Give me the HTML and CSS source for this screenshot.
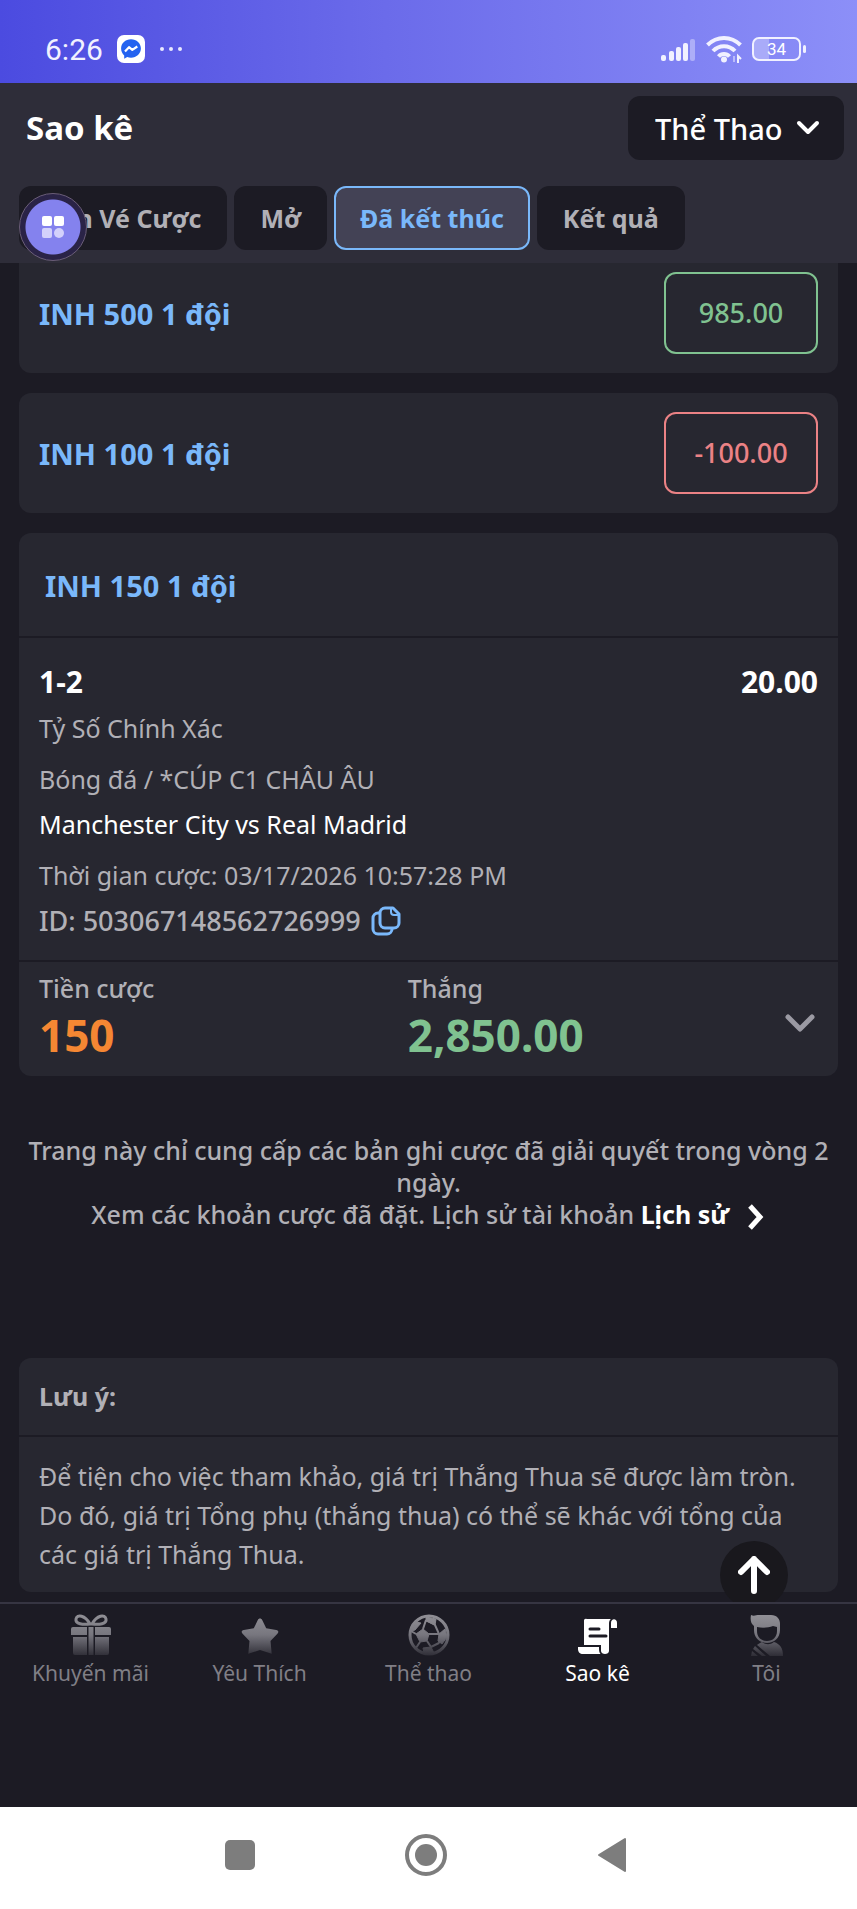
FILE: index.html
```
<!DOCTYPE html>
<html lang="vi">
  <head>
    <meta charset="UTF-8" />
    <meta name="viewport" content="width=device-width, initial-scale=1.0" />
    <title>Sao kê</title>
    <link rel="stylesheet" href="styles.css">
  </head>
  <body>
    <div class="status-bar">
      <div class="status-left">
        <span class="clock">6:26</span>
        <svg width="28" height="28" viewBox="0 0 28 28">
          <rect width="28" height="28" rx="7" fill="#fff" />
          <path d="M14 4.300c-5.600 0-9.900 4-9.900 9.300 0 2.800 1.200 5.200 3.100 6.900v3.200l3-1.600c1.200.4 2.500.6 3.800.6 5.600 0 9.900-4 9.900-9.100S19.600 4.300 14 4.300z" fill="#2463f0" />
          <path d="M8 16.500l4-4.300 3.300 2.700 5-3.400" fill="none" stroke="#fff" stroke-width="2.200" stroke-linejoin="round" />
        </svg>
        <svg width="24" height="6" viewBox="0 0 24 6" fill="#e9e9ff">
          <circle cx="3" cy="3" r="2" />
          <circle cx="12" cy="3" r="2" />
          <circle cx="21" cy="3" r="2" />
        </svg>
      </div>
      <div class="status-right">
        <svg width="36" height="24" viewBox="0 0 36 24" fill="#f1f1ff">
          <rect x="1" y="18" width="5" height="6" rx="2" />
          <rect x="9" y="14" width="5" height="10" rx="2" />
          <rect x="16" y="10" width="5" height="14" rx="2" />
          <rect x="23" y="6" width="5" height="18" rx="2" />
          <rect x="30" y="2" width="5" height="22" rx="2" opacity="0.4" />
        </svg>
        <svg width="36" height="28" viewBox="0 0 36 28" fill="none" stroke="#f1f1ff" stroke-width="4">
          <path d="M1.500 10C11 .6 25 .6 34.500 10" />
          <path d="M7 16c6-6.500 16-6.500 22 0" />
          <path d="M12.500 21.500c3-3.500 8-3.500 11 0" />
          <circle cx="18" cy="24.500" r="1.500" stroke-width="3" />
          <path d="M32 28v-7l3 3" stroke-width="2" />
          <path d="M28 21v6" stroke-width="2" opacity="0.5" />
        </svg>
        <span class="battery">34</span>
      </div>
    </div>

    <header class="header">
      <div class="title-row">
        <h1>Sao kê</h1>
        <div class="select-box">
          <select aria-label="Loại cược">
            <option>Thể Thao</option>
          </select>
          <svg class="select-arrow" width="24" height="16" viewBox="0 0 24 16">
            <path d="M3 3l9 9 9-9" fill="none" stroke="#fff" stroke-width="4" stroke-linecap="round" stroke-linejoin="round" />
          </svg>
        </div>
      </div>
      <div class="tabs">
        <button class="tab">Bán Vé Cược</button>
        <button class="tab">Mở</button>
        <button class="tab active">Đã kết thúc</button>
        <button class="tab">Kết quả</button>
      </div>
      <!-- Nút nổi -->
      <button class="bubble" aria-label="Menu">
        <svg width="24" height="24" viewBox="0 0 24 24" fill="#fff">
          <rect x="1" y="1" width="10" height="10" rx="2" />
          <rect x="13" y="1" width="10" height="10" rx="2" />
          <rect x="1" y="13" width="10" height="10" rx="2" fill="#d3d1fb" />
          <circle cx="18" cy="18" r="5" fill="#d3d1fb" />
        </svg>
      </button>
    </header>

    <main class="content">
      <section class="card bet-row bet-row-cut">
        <h2>INH 500 1 đội</h2>
        <span class="result win">985.00</span>
      </section>
      <section class="card bet-row">
        <h2>INH 100 1 đội</h2>
        <span class="result lose">-100.00</span>
      </section>

      <section class="card">
        <div class="bet-head">
          <h2>INH 150 1 đội</h2>
        </div>
        <div class="bet-body">
          <div class="pick">
            <span>1-2</span>
            <span>20.00</span>
          </div>
          <p>Tỷ Số Chính Xác</p>
          <p class="group-start">Bóng đá / *CÚP C1 CHÂU ÂU</p>
          <p class="match">Manchester City vs Real Madrid</p>
          <p class="group-start">Thời gian cược: 03/17/2026 10:57:28 PM</p>
          <p class="bet-id">
            ID: 503067148562726999
            <button class="icon-btn" aria-label="Sao chép">
              <svg width="30" height="30" viewBox="0 0 30 30" fill="none" stroke="#7ab8fa" stroke-width="3" stroke-linejoin="round">
                <path d="M14 2h8l6 6v9a5 5 0 0 1-5 5h-9a5 5 0 0 1-5-5V7a5 5 0 0 1 5-5z" />
                <path d="M20 2v4a3 3 0 0 0 3 3h5" stroke-width="2" />
                <path d="M9 7H7a5 5 0 0 0-5 5v11a5 5 0 0 0 5 5h9a5 5 0 0 0 5-5v-1" />
              </svg>
            </button>
          </p>
        </div>
        <div class="bet-foot">
          <div class="stake">
            <span class="label">Tiền cược</span>
            <span class="amount">150</span>
          </div>
          <div class="payout">
            <span class="label">Thắng</span>
            <span class="amount">2,850.00</span>
          </div>
          <button class="icon-btn toggle" aria-label="Chi tiết">
            <svg width="30" height="20" viewBox="0 0 30 20">
              <path d="M3 3l12 12L27 3" fill="none" stroke="#9b9aa3" stroke-width="5" stroke-linecap="round" stroke-linejoin="round" />
            </svg>
          </button>
        </div>
      </section>

      <div class="history">
        <p>Trang này chỉ cung cấp các bản ghi cược đã giải quyết trong vòng 2 ngày.</p>
        <p>
          Xem các khoản cược đã đặt. Lịch sử tài khoản
          <a href="#">Lịch sử
            <svg width="20" height="28" viewBox="0 0 20 28">
              <path d="M4 3l10 11L4 25" fill="none" stroke="#fff" stroke-width="5" />
            </svg>
          </a>
        </p>
      </div>

      <section class="card">
        <h3>Lưu ý:</h3>
        <p class="note-text">Để tiện cho việc tham khảo, giá trị Thắng Thua sẽ được làm tròn. Do đó, giá trị Tổng phụ (thắng thua) có thể sẽ khác với tổng của các giá trị Thắng Thua.</p>
      </section>

      <button class="to-top" aria-label="Lên đầu trang">
        <svg width="32" height="38" viewBox="0 0 32 38">
          <path d="M16 35V3M3 16L16 3l13 13" fill="none" stroke="#fff" stroke-width="6" stroke-linecap="round" stroke-linejoin="round" />
        </svg>
      </button>
    </main>

    <nav class="bottom-nav">
      <a href="#">
        <svg width="42" height="42" viewBox="0 0 42 42">
          <defs>
            <linearGradient id="fade" gradientUnits="userSpaceOnUse" x1="0" y1="0" x2="0" y2="42">
              <stop offset="0" stop-color="#929197" />
              <stop offset="0.5" stop-color="#77767e" />
              <stop offset="1" stop-color="#2e2d36" />
            </linearGradient>
          </defs>
          <path d="M20 10C15 1 7 0 6 5s7 6 14 5zM22 10C27 1 35 0 36 5s-7 6-14 5z" fill="none" stroke="url(#fade)" stroke-width="3" />
          <path d="M3 13h14v8H1v-6a2 2 0 0 1 2-2zM18.500 13h5v28h-5zM25 13h14a2 2 0 0 1 2 2v6H25zM3 23h14v18H5a2 2 0 0 1-2-2zM25 23h14v16a2 2 0 0 1-2 2H25z" fill="url(#fade)" />
        </svg>
        <span>Khuyến mãi</span>
      </a>
      <a href="#">
        <svg width="42" height="42" viewBox="0 0 42 42">
          <path d="M21 4.500c1 0 1.700.5 2.200 1.500l4 8.300 10 1.600c2.300.4 2.800 2.200 1.200 3.900l-6.900 7.200 1.200 12.700L21 36l-11.700 3.700 1.200-12.700-6.900-7.200c-1.600-1.700-1.100-3.500 1.200-3.900l10-1.600 4-8.300c.5-1 1.200-1.500 2.200-1.500z" fill="url(#fade)" />
        </svg>
        <span>Yêu Thích</span>
      </a>
      <a href="#">
        <svg width="42" height="42" viewBox="0 0 42 42" stroke="url(#fade)" fill="none">
          <circle cx="21" cy="21" r="19" stroke-width="3" />
          <path d="M15 15l6 5-2 7-7 1-4-8z" fill="url(#fade)" />
          <path d="M15 15l3-9M8 20l-5-3M12 28l-4 6M19 27l4 6M21 20h10M31 20l-4-9-9-5M23 33l8-4M31 29l4-6" stroke-width="2" />
          <path d="M18 3l10 2-1 6-9-4zM31 20l6-5 2 8-5 7-4-3zM15 34l8-1 3 6-10 0zM8 8l5 1-6 7-4 1z" fill="url(#fade)" />
        </svg>
        <span>Thể thao</span>
      </a>
      <a href="#" class="current">
        <svg width="42" height="42" viewBox="0 0 42 42" fill="#fff">
          <path d="M10 5h24c-1.500 1-2 2.500-2 5v27c0 4-8 4-8 0v-6H7V7a2 2 0 0 1 3-2z" />
          <path d="M34 14V9c0-5 6-5 6 0v5z" />
          <path d="M1 33h21v2c0 2 .5 4 1.500 5H6c-3 0-5-2-5-5z" />
          <path d="M13 15h9M13 22h16" stroke="#1c1b24" stroke-width="3" stroke-linecap="round" />
        </svg>
        <span>Sao kê</span>
      </a>
      <a href="#">
        <svg width="42" height="42" viewBox="0 0 42 42">
          <path d="M5 1c3 1.500 5 0 8 0h12c6 0 9 4 9 9v6c0 8-6 13-13 13S8 24 8 16v-4C5 10 4 6 5 1zm6 12v4c0 6 4 10 10 10s10-4 10-10v-4l-4-1c-5 2-11 2-16 1z" fill="url(#fade)" fill-rule="evenodd" />
          <path d="M16 28c4 3 8 3 12 0 6 2 9 6 9 14H24L11 31c1-1 3-2 5-3zM9 32l11 10h-4L7 35zM6 37l6 5H5z" fill="url(#fade)" />
        </svg>
        <span>Tôi</span>
      </a>
    </nav>

    <div class="system-bar">
      <button aria-label="Gần đây">
        <svg width="42" height="42" viewBox="0 0 42 42"><rect x="6" y="6" width="30" height="30" rx="5" fill="#7d7d7d" /></svg>
      </button>
      <button aria-label="Trang chủ">
        <svg width="42" height="42" viewBox="0 0 42 42">
          <circle cx="21" cy="21" r="19" fill="none" stroke="#7d7d7d" stroke-width="4" />
          <circle cx="21" cy="21" r="11" fill="#7d7d7d" />
        </svg>
      </button>
      <button aria-label="Quay lại">
        <svg width="42" height="42" viewBox="0 0 42 42">
          <path d="M8 21L34 5v32z" fill="#7d7d7d" stroke="#7d7d7d" stroke-width="2" stroke-linejoin="round" />
        </svg>
      </button>
    </div>
  </body>
</html>
```
FILE: styles.css
```
/* Chung */
* {
  box-sizing: border-box;
}

body {
  display: flex;
  flex-direction: column;
  min-height: 100vh;
  margin: 0;
  font-family: "Noto Sans", "Open Sans", sans-serif;
  font-size: 25px;
  color: #b1b0b6;
  background-color: #1c1b24;
}

h1,
h2,
h3,
p {
  margin: 0;
}

button,
select {
  font-family: inherit;
  border: none;
  cursor: pointer;
}

a {
  color: inherit;
  text-decoration: none;
}

svg {
  display: block;
}

/* Thanh trạng thái */
.status-bar {
  display: flex;
  justify-content: space-between;
  align-items: center;
  height: 83px;
  padding: 15px 51px 0 45px;
  background: linear-gradient(90deg, #4b4be0, #6b6bea 45%, #8c8ff8);
}

.status-left,
.status-right {
  display: flex;
  align-items: center;
}

.status-left {
  gap: 14px;
}

.status-right {
  gap: 10px;
}

.clock {
  font-family: Roboto, sans-serif;
  font-size: 30px;
  color: #f1f1ff;
}

.battery {
  position: relative;
  width: 49px;
  height: 24px;
  margin-right: 5px;
  border: 2px solid #f1f1ff;
  border-radius: 7px;
  font: 17px/20px Roboto, sans-serif;
  color: #fff;
  text-align: center;
  background: linear-gradient(90deg, #a9abf9 34%, transparent 34%);
}

.battery::after {
  content: "";
  position: absolute;
  top: 6px;
  right: -7px;
  width: 3px;
  height: 8px;
  border-radius: 2px;
  background-color: #f1f1ff;
}

/* Đầu trang */
.header {
  position: relative;
  padding: 13px 13px 13px 19px;
  background-color: #2e2d39;
}

.title-row {
  display: flex;
  justify-content: space-between;
  align-items: center;
  margin-bottom: 26px;
  padding-left: 7px;
}

h1 {
  font-size: 33px;
  line-height: 40px;
  color: #fff;
}

.select-box {
  position: relative;
}

.select-box select {
  height: 64px;
  padding: 0 61px 0 27px;
  border-radius: 12px;
  font-size: 29px;
  font-weight: 500;
  color: #fff;
  background-color: #1c1b24;
  appearance: none;
}

.select-arrow {
  position: absolute;
  top: 24px;
  right: 24px;
  pointer-events: none;
}

.tabs {
  display: flex;
  gap: 7px;
}

.tab {
  height: 64px;
  padding: 0 26px;
  border-radius: 12px;
  font-size: 25px;
  font-weight: bold;
  color: #b1b0b6;
  white-space: nowrap;
  background-color: #1c1b24;
}

.tab.active {
  border: 2px solid #7ab8fa;
  padding: 0 24px;
  color: #7ab8fa;
  background-color: #434255;
}

.bubble {
  position: absolute;
  left: 19px;
  bottom: 2px;
  display: flex;
  justify-content: center;
  align-items: center;
  width: 68px;
  height: 68px;
  padding: 0;
  border: 1px solid #6a5d78;
  border-radius: 50%;
  background: radial-gradient(circle, #8482ee 27px, #2a2347 28px);
}

/* Danh sách cược */
.content {
  position: relative;
  flex: 1;
  padding: 0 19px 10px;
  overflow: hidden;
}

.card {
  margin-bottom: 20px;
  border-radius: 12px;
  background-color: #272730;
}

.content .card:last-of-type {
  margin-bottom: 0;
}

.bet-row {
  display: flex;
  justify-content: space-between;
  align-items: center;
  padding: 19px 20px;
}

.bet-row-cut {
  padding-top: 9px;
  border-radius: 0 0 12px 12px;
}

h2 {
  font-size: 29px;
  color: #7ab8fa;
}

.result {
  width: 154px;
  border: 2px solid;
  border-radius: 12px;
  font-size: 27px;
  font-weight: 500;
  line-height: 78px;
  text-align: center;
}

.win {
  color: #80c290;
}

.lose {
  color: #eb8285;
}

.bet-head {
  padding: 33px 26px 31px;
  line-height: 39px;
}

.bet-body {
  padding: 21px 20px 17px;
  border-top: 2px solid #1c1b24;
  line-height: 45px;
}

.pick {
  display: flex;
  justify-content: space-between;
  margin-bottom: 2px;
  font-size: 30px;
  font-weight: bold;
  color: #fff;
}

.group-start {
  margin-top: 6px;
}

.match {
  color: #fff;
}

.bet-id {
  display: flex;
  align-items: center;
  gap: 10px;
  font-size: 27px;
  font-weight: 500;
}

.icon-btn {
  padding: 0;
  background: none;
}

.bet-foot {
  display: flex;
  align-items: center;
  gap: 4px;
  padding: 0 23px 0 20px;
  border-top: 2px solid #1c1b24;
}

.stake,
.payout {
  display: flex;
  flex-direction: column;
  gap: 6px;
  padding: 10px 0 16px;
}

.stake {
  width: 47%;
}

.payout {
  flex: 1;
}

.toggle {
  padding-top: 10px;
}

.label {
  font-weight: 500;
  line-height: 32px;
}

.amount {
  font-size: 44px;
  font-weight: bold;
  line-height: 50px;
}

.stake .amount {
  color: #f58733;
}

.payout .amount {
  color: #80c290;
}

/* Lịch sử */
.history {
  margin: 58px 0 127px;
  font-weight: 500;
  line-height: 32px;
  text-align: center;
}

.history a {
  font-weight: bold;
  color: #fff;
}

.history svg {
  display: inline-block;
  margin-left: 10px;
  vertical-align: middle;
}

/* Lưu ý */
h3 {
  padding: 19px 20px;
  border-bottom: 2px solid #1c1b24;
  font-size: 25px;
  line-height: 39px;
}

.note-text {
  padding: 20px 20px 18px;
  line-height: 39px;
}

.to-top {
  position: absolute;
  right: 69px;
  bottom: -7px;
  display: flex;
  justify-content: center;
  align-items: center;
  width: 68px;
  height: 68px;
  padding: 0;
  border-radius: 50%;
  background-color: #19181d;
}

/* Thanh điều hướng */
.bottom-nav {
  display: grid;
  grid-template-columns: repeat(5, 1fr);
  padding: 10px 6px 118px;
  border-top: 2px solid #363542;
  font-size: 21px;
  line-height: 32px;
  color: #807f86;
}

.bottom-nav a {
  display: flex;
  flex-direction: column;
  align-items: center;
  gap: 1px;
}

.bottom-nav .current {
  color: #fff;
}

.system-bar {
  display: flex;
  justify-content: center;
  gap: 144px;
  padding: 27px 6px 33px 0;
  background-color: #fff;
}

.system-bar button {
  padding: 0;
  background: none;
}
```
